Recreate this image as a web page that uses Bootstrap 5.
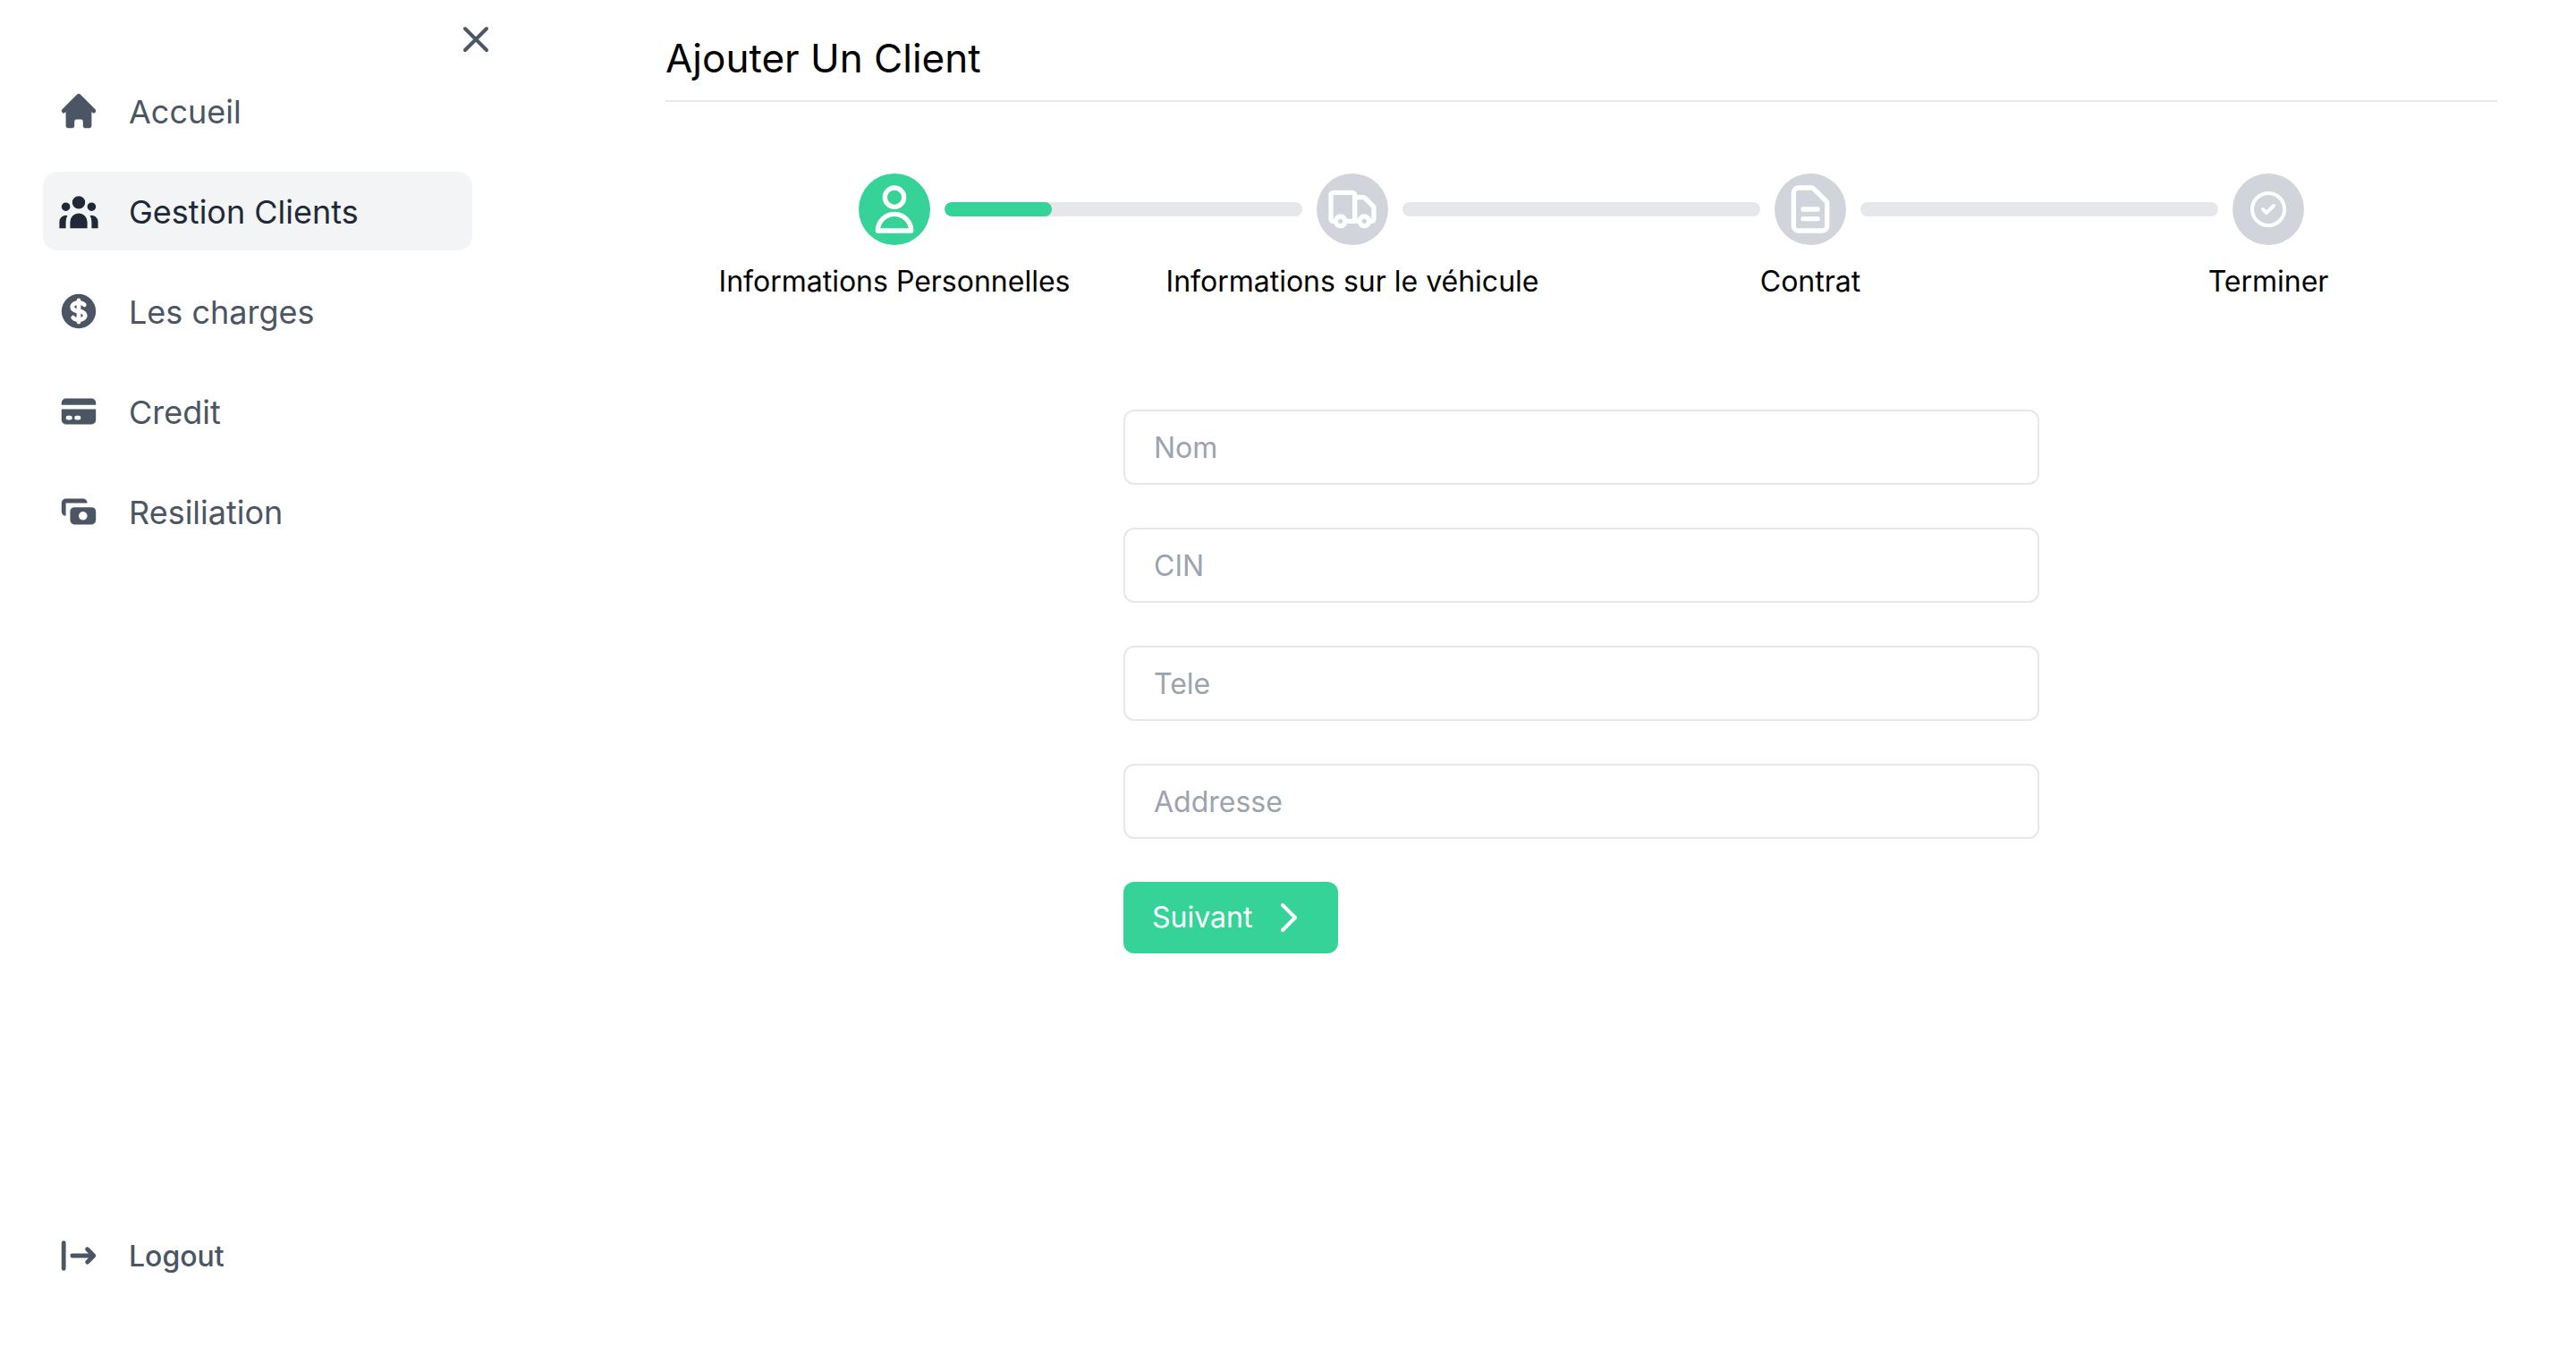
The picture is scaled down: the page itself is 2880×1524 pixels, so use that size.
<!DOCTYPE html>
<html lang="fr">
<head>
<meta charset="utf-8">
<meta name="viewport" content="width=device-width, initial-scale=1">
<title>Ajouter Un Client</title>
<link href="https://cdn.jsdelivr.net/npm/bootstrap@5.3.0/dist/css/bootstrap.min.css" rel="stylesheet">
<style>
  body { font-family: Inter, "Liberation Sans", sans-serif; font-size: 32px; line-height: 50px; color: #000; background: #fff; }
  .sidebar { width: 20%; padding: 20px 48px 76px; color: #4b5563; }
  .close-btn { color: #4b5563; margin-right: -28px; margin-bottom: 12px; line-height: 0; }
  .icon { width: 48px; height: 48px; flex: none; }
  .side-list { gap: 24px; }
  .side-link { height: 88px; padding: 0 16px; gap: 32px; border-radius: 16px; color: #4b5563; font-size: 36px; }
  .side-link span { padding-top: 2px; }
  .side-link:hover { color: #1f2937; }
  .side-link.active { background: #f3f4f6; color: #1f2937; }
  .side-link.logout { font-size: 32px; font-weight: 500; }
  .content { padding: 32px 88px 0 168px; }
  .page-title { font-size: 44px; line-height: 66px; padding-bottom: 14px; margin-bottom: 80px; font-weight: 400; border-bottom: 2px solid #e5e7eb; }
  .stepper { margin-bottom: 118px; }
  .step-dot { width: 80px; height: 80px; border-radius: 50%; background: #d1d5db; color: #fff; }
  .step-dot svg { width: 64px; height: 64px; }
  .step-dot .icon { width: 48px; height: 48px; }
  .step-done { background: #36d399; }
  .step-bar { top: 32px; left: calc(50% + 56px); width: calc(100% - 112px); height: 16px; border-radius: 8px; background: #e5e7eb; }
  .step-bar .progress-bar { background: #36d399; border-radius: 8px; }
  .step-label { margin-top: 16px; }
  .client-form { gap: 48px; }
  .client-form .form-control { height: 84px; padding: 0 32px; border: 2px solid #e5e7eb; border-radius: 12px; font-size: 32px; }
  .client-form .form-control::placeholder { color: #9ca3af; opacity: 1; }
  .next-btn { height: 80px; padding: 0 32px; gap: 16px; border: 0; border-radius: 12px; background: #36d399; color: #fff; font-size: 32px; }
  .next-btn:hover { background: #2bbf89; color: #fff; }
</style>
<script src="https://cdn.jsdelivr.net/npm/bootstrap@5.3.0/dist/js/bootstrap.bundle.min.js"></script>
</head>
<body>
<div class="d-flex min-vh-100">
  <aside class="sidebar d-flex flex-column flex-shrink-0">
    <button type="button" class="close-btn btn p-0 border-0 align-self-end" aria-label="Fermer">
      <svg class="icon" viewBox="0 0 24 24" fill="none" stroke="currentColor" stroke-width="2" stroke-linecap="round" stroke-linejoin="round"><path d="M6 18L18 6M6 6l12 12"/></svg>
    </button>
    <nav class="d-flex flex-column flex-grow-1">
      <ul class="side-list list-unstyled d-flex flex-column mb-0">
        <li><a href="#" class="side-link d-flex align-items-center text-decoration-none">
          <svg class="icon" viewBox="0 0 20 20" fill="currentColor"><path d="M10.707 2.293a1 1 0 00-1.414 0l-7 7a1 1 0 001.414 1.414L4 10.414V17a1 1 0 001 1h2a1 1 0 001-1v-2a1 1 0 011-1h2a1 1 0 011 1v2a1 1 0 001 1h2a1 1 0 001-1v-6.586l.293.293a1 1 0 001.414-1.414l-7-7z"/></svg>
          <span>Accueil</span></a></li>
        <li><a href="#" class="side-link active d-flex align-items-center text-decoration-none" aria-current="page">
          <svg class="icon" viewBox="0 0 20 20" fill="currentColor"><path d="M13 6a3 3 0 11-6 0 3 3 0 016 0zM18 8a2 2 0 11-4 0 2 2 0 014 0zM14 15a4 4 0 00-8 0v3h8v-3zM6 8a2 2 0 11-4 0 2 2 0 014 0zM16 18v-3a5.972 5.972 0 00-.75-2.906A3.005 3.005 0 0119 15v3h-3zM4.75 12.094A5.973 5.973 0 004 15v3H1v-3a3 3 0 013.75-2.906z"/></svg>
          <span>Gestion Clients</span></a></li>
        <li><a href="#" class="side-link d-flex align-items-center text-decoration-none">
          <svg class="icon" viewBox="0 0 20 20" fill="currentColor"><path d="M8.433 7.418c.155-.103.346-.196.567-.267v1.698a2.305 2.305 0 01-.567-.267C8.07 8.34 8 8.114 8 8c0-.114.07-.34.433-.582zM11 12.849v-1.698c.22.071.412.164.567.267.364.243.433.468.433.582 0 .114-.07.34-.433.582a2.305 2.305 0 01-.567.267z"/><path fill-rule="evenodd" d="M10 18a8 8 0 100-16 8 8 0 000 16zm1-13a1 1 0 10-2 0v.092a4.535 4.535 0 00-1.676.662C6.602 6.234 6 7.009 6 8c0 .99.602 1.765 1.324 2.246.48.32 1.054.545 1.676.662v1.941c-.391-.127-.68-.317-.843-.504a1 1 0 10-1.51 1.31c.562.649 1.413 1.076 2.353 1.253V15a1 1 0 102 0v-.092a4.535 4.535 0 001.676-.662C13.398 13.766 14 12.991 14 12c0-.99-.602-1.765-1.324-2.246A4.535 4.535 0 0011 9.092V7.151c.391.127.68.317.843.504a1 1 0 101.511-1.31c-.563-.649-1.413-1.076-2.354-1.253V5z"/></svg>
          <span>Les charges</span></a></li>
        <li><a href="#" class="side-link d-flex align-items-center text-decoration-none">
          <svg class="icon" viewBox="0 0 20 20" fill="currentColor"><path d="M4 4a2 2 0 00-2 2v1h16V6a2 2 0 00-2-2H4z"/><path fill-rule="evenodd" d="M18 9H2v5a2 2 0 002 2h12a2 2 0 002-2V9zM4 13a1 1 0 011-1h1a1 1 0 110 2H5a1 1 0 01-1-1zm5-1a1 1 0 100 2h1a1 1 0 100-2H9z"/></svg>
          <span>Credit</span></a></li>
        <li><a href="#" class="side-link d-flex align-items-center text-decoration-none">
          <svg class="icon" viewBox="0 0 20 20" fill="currentColor"><path fill-rule="evenodd" d="M4 4a2 2 0 00-2 2v4a2 2 0 002 2V6h10a2 2 0 00-2-2H4zm2 6a2 2 0 012-2h8a2 2 0 012 2v4a2 2 0 01-2 2H8a2 2 0 01-2-2v-4zm6 4a2 2 0 100-4 2 2 0 000 4z"/></svg>
          <span>Resiliation</span></a></li>
      </ul>
      <a href="#" class="side-link logout d-flex align-items-center text-decoration-none mt-auto">
        <svg class="icon" viewBox="0 0 20 20" fill="currentColor"><path fill-rule="evenodd" d="M3 3a1 1 0 00-1 1v12a1 1 0 102 0V4a1 1 0 00-1-1zm10.293 9.293a1 1 0 001.414 1.414l3-3a1 1 0 000-1.414l-3-3a1 1 0 10-1.414 1.414L14.586 9H7a1 1 0 100 2h7.586l-1.293 1.293z"/></svg>
        <span>Logout</span></a>
    </nav>
  </aside>

  <main class="content flex-grow-1">
    <h1 class="page-title">Ajouter Un Client</h1>

    <ol class="stepper list-unstyled row g-0">
      <li class="col-3 position-relative d-flex flex-column align-items-center">
        <span class="step-dot step-done d-flex align-items-center justify-content-center">
          <svg viewBox="0 0 24 24" fill="none" stroke="currentColor" stroke-width="2" stroke-linecap="round" stroke-linejoin="round"><path d="M16 7a4 4 0 11-8 0 4 4 0 018 0zM12 14a7 7 0 00-7 7h14a7 7 0 00-7-7z"/></svg>
        </span>
        <div class="step-bar progress position-absolute" role="progressbar" aria-label="Progression" aria-valuenow="30" aria-valuemin="0" aria-valuemax="100"><div class="progress-bar" style="width: 30%"></div></div>
        <span class="step-label">Informations Personnelles</span>
      </li>
      <li class="col-3 position-relative d-flex flex-column align-items-center">
        <span class="step-dot d-flex align-items-center justify-content-center">
          <svg viewBox="0 0 24 24" fill="none" stroke="currentColor" stroke-width="2" stroke-linecap="round" stroke-linejoin="round"><path d="M13 16V6a1 1 0 00-1-1H4a1 1 0 00-1 1v10a1 1 0 001 1h1m8-1a1 1 0 01-1 1H9m4-1V8a1 1 0 011-1h2.586a1 1 0 01.707.293l3.414 3.414a1 1 0 01.293.707V16a1 1 0 01-1 1h-1m-6-1a1 1 0 001 1h1M5 17a2 2 0 104 0m-4 0a2 2 0 114 0m6 0a2 2 0 104 0m-4 0a2 2 0 114 0"/></svg>
        </span>
        <div class="step-bar position-absolute"></div>
        <span class="step-label">Informations sur le véhicule</span>
      </li>
      <li class="col-3 position-relative d-flex flex-column align-items-center">
        <span class="step-dot d-flex align-items-center justify-content-center">
          <svg viewBox="0 0 24 24" fill="none" stroke="currentColor" stroke-width="2" stroke-linecap="round" stroke-linejoin="round"><path d="M9 12h6m-6 4h6m2 5H7a2 2 0 01-2-2V5a2 2 0 012-2h5.586a1 1 0 01.707.293l5.414 5.414a1 1 0 01.293.707V19a2 2 0 01-2 2z"/></svg>
        </span>
        <div class="step-bar position-absolute"></div>
        <span class="step-label">Contrat</span>
      </li>
      <li class="col-3 d-flex flex-column align-items-center">
        <span class="step-dot d-flex align-items-center justify-content-center">
          <svg class="icon" viewBox="0 0 24 24" fill="none" stroke="currentColor" stroke-width="2" stroke-linecap="round" stroke-linejoin="round"><circle cx="12" cy="12" r="9"/><path d="M9 12l2 2 4-4"/></svg>
        </span>
        <span class="step-label">Terminer</span>
      </li>
    </ol>

    <form class="client-form w-50 mx-auto d-flex flex-column">
      <input type="text" class="form-control" placeholder="Nom" aria-label="Nom">
      <input type="text" class="form-control" placeholder="CIN" aria-label="CIN">
      <input type="tel" class="form-control" placeholder="Tele" aria-label="Tele">
      <input type="text" class="form-control" placeholder="Addresse" aria-label="Addresse">
      <button type="button" class="next-btn btn d-flex align-items-center align-self-start">Suivant
        <svg class="icon" viewBox="0 0 24 24" fill="none" stroke="currentColor" stroke-width="2" stroke-linecap="round" stroke-linejoin="round"><path d="M9 5l7 7-7 7"/></svg>
      </button>
    </form>
  </main>
</div>
</body>
</html>
